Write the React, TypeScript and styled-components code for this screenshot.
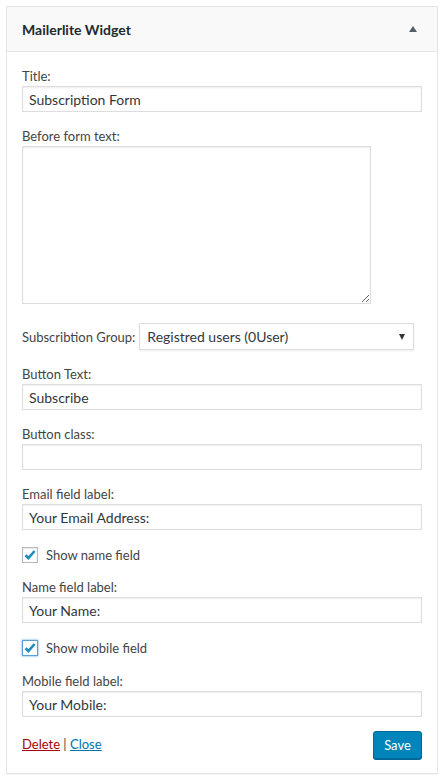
import React from "react";
import styled, { createGlobalStyle } from "styled-components";

const GlobalStyle = createGlobalStyle`
  html, body {
    margin: 0;
    padding: 0;
    background: #ffffff;
  }
  body {
    font-family: Lato, "Open Sans", "Liberation Sans", sans-serif;
    color: #444;
  }
`;

const Page = styled.div`
  padding: 6px 6px 8px 6px;
`;

const Widget = styled.div`
  border: 1px solid #e5e5e5;
  background: #fff;
  box-shadow: 0 1px 1px rgba(0, 0, 0, 0.04);
`;

const Header = styled.div`
  height: 44px;
  background: #f9f9f9;
  border-bottom: 1px solid #e5e5e5;
  display: flex;
  align-items: center;
  justify-content: space-between;
  padding: 0 20px 0 15px;
`;

const HeaderTitle = styled.h3`
  margin: 0;
  font-size: 14px;
  font-weight: 700;
  color: #23282d;
`;

const Arrow = styled.span`
  width: 0;
  height: 0;
  border-left: 4px solid transparent;
  border-right: 4px solid transparent;
  border-bottom: 6px solid #555d66;
`;

const Body = styled.div`
  padding: 15px 15px 14px 15px;
  display: flex;
  flex-direction: column;
  gap: 15px;
`;

const Field = styled.div`
  display: flex;
  flex-direction: column;
  gap: 1px;
`;

const Label = styled.label`
  font-size: 13px;
  line-height: 18px;
  color: #444;
`;

const TextInput = styled.input`
  box-sizing: border-box;
  width: 100%;
  height: 26px;
  margin: 0;
  padding: 0 6px;
  border: 1px solid #ddd;
  box-shadow: inset 0 1px 2px rgba(0, 0, 0, 0.07);
  font-family: inherit;
  font-size: 14px;
  color: #32373c;
  background: #fff;
  outline: none;
`;

const TextArea = styled.textarea`
  box-sizing: border-box;
  width: 349px;
  height: 158px;
  margin: 0;
  border: 1px solid #ddd;
  box-shadow: inset 0 1px 2px rgba(0, 0, 0, 0.07);
  font-family: inherit;
  font-size: 14px;
  outline: none;
  display: block;
`;

const SelectRow = styled.div`
  display: flex;
  align-items: center;
  gap: 4px;
  margin-top: 4px;
`;

const SelectWrap = styled.div`
  position: relative;
  width: 275px;
  height: 27px;

  &::after {
    content: "";
    position: absolute;
    right: 9px;
    top: 11px;
    border-left: 3.5px solid transparent;
    border-right: 3.5px solid transparent;
    border-top: 6px solid #32373c;
    pointer-events: none;
  }
`;

const Select = styled.select`
  appearance: none;
  box-sizing: border-box;
  width: 100%;
  height: 27px;
  margin: 0;
  padding: 0 7px;
  border: 1px solid #ddd;
  box-shadow: 0 1px 2px rgba(0, 0, 0, 0.07);
  background: #fff;
  font-family: inherit;
  font-size: 14px;
  color: #32373c;
  outline: none;
`;

const CheckRow = styled.label<{ $extra?: number }>`
  display: flex;
  align-items: center;
  gap: 8px;
  font-size: 13px;
  line-height: 16px;
  color: #444;
  margin-top: 2px;
  margin-bottom: ${({ $extra }) => $extra ?? 0}px;
`;

const Box = styled.span<{ $focused?: boolean }>`
  box-sizing: border-box;
  width: 16px;
  height: 16px;
  border: 1px solid ${({ $focused }) => ($focused ? "#5b9dd9" : "#b4b9be")};
  box-shadow: ${({ $focused }) =>
    $focused
      ? "0 0 2px rgba(30, 140, 190, 0.8)"
      : "inset 0 1px 2px rgba(0, 0, 0, 0.1)"};
  background: #fff;
  display: flex;
  align-items: center;
  justify-content: center;
`;

const Footer = styled.div`
  display: flex;
  justify-content: space-between;
  align-items: flex-start;
  margin-top: -1px;
`;

const Links = styled.div`
  font-size: 13px;
  line-height: 18px;
  color: #444;
  padding-top: 4px;
`;

const Link = styled.a<{ $danger?: boolean }>`
  color: ${({ $danger }) => ($danger ? "#a00" : "#0073aa")};
  text-decoration: underline;
  cursor: pointer;
`;

const SaveButton = styled.button`
  box-sizing: border-box;
  width: 49px;
  height: 28px;
  margin: 0;
  padding: 0;
  border: 1px solid #006799;
  border-radius: 3px;
  background: #0085ba;
  box-shadow: 0 1px 0 #006799;
  color: #fff;
  font-family: inherit;
  font-size: 13px;
  cursor: pointer;
`;

const Check = () => (
  <svg width="14" height="14" viewBox="0 0 14 14">
    <path
      d="M2.5 7.2 L5.4 10 L11.6 3"
      fill="none"
      stroke="#1e8cbe"
      strokeWidth="2.6"
      strokeLinecap="butt"
    />
  </svg>
);

const TextField: React.FC<{ label: string; value?: string }> = ({ label, value }) => (
  <Field>
    <Label>{label}</Label>
    <TextInput type="text" defaultValue={value ?? ""} />
  </Field>
);

export default function App() {
  return (
    <Page>
      <GlobalStyle />
      <Widget>
        <Header>
          <HeaderTitle>Mailerlite Widget</HeaderTitle>
          <Arrow />
        </Header>
        <Body>
          <TextField label="Title:" value="Subscription Form" />
          <Field>
            <Label>Before form text:</Label>
            <TextArea />
          </Field>
          <SelectRow>
            <Label>Subscribtion Group:</Label>
            <SelectWrap>
              <Select defaultValue="reg">
                <option value="reg">Registred users (0User)</option>
              </Select>
            </SelectWrap>
          </SelectRow>
          <TextField label="Button Text:" value="Subscribe" />
          <TextField label="Button class:" />
          <TextField label="Email field label:" value="Your Email Address:" />
          <CheckRow>
            <Box>
              <Check />
            </Box>
            Show name field
          </CheckRow>
          <TextField label="Name field label:" value="Your Name:" />
          <CheckRow $extra={1}>
            <Box $focused>
              <Check />
            </Box>
            Show mobile field
          </CheckRow>
          <TextField label="Mobile field label:" value="Your Mobile:" />
          <Footer>
            <Links>
              <Link $danger>Delete</Link> | <Link>Close</Link>
            </Links>
            <SaveButton>Save</SaveButton>
          </Footer>
        </Body>
      </Widget>
    </Page>
  );
}
